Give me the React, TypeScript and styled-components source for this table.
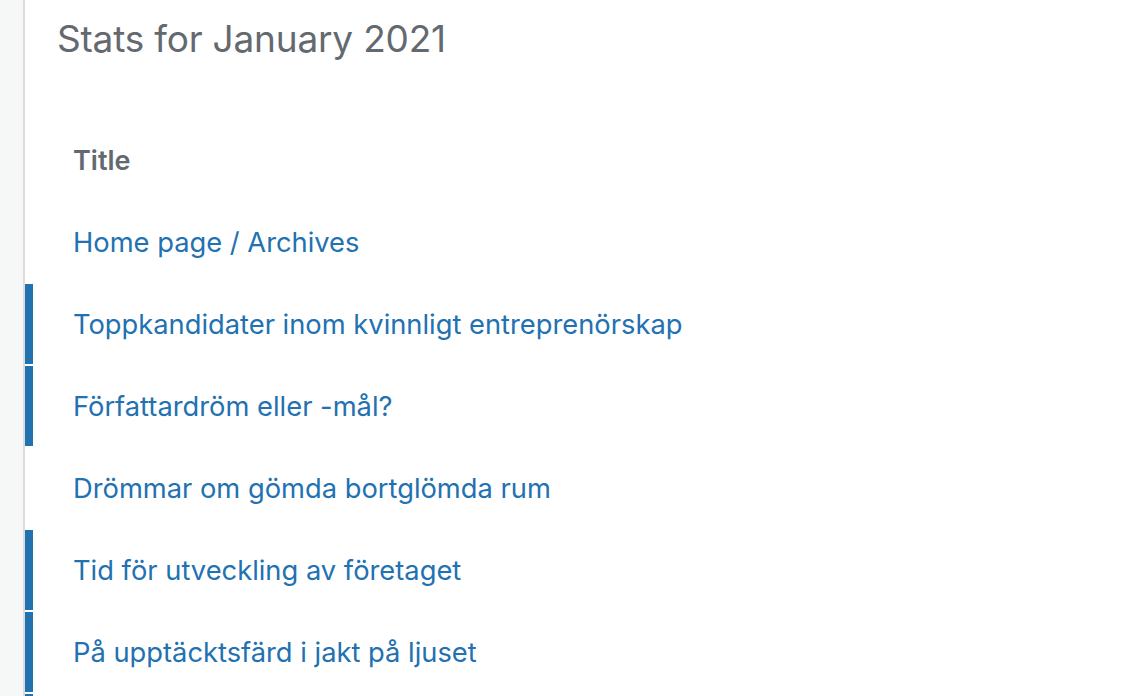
import React from "react";
import styled, { createGlobalStyle } from "styled-components";

const Global = createGlobalStyle`
  html, body { margin: 0; padding: 0; background: #fff; }
  body { font-family: Inter, "Liberation Sans", Arial, sans-serif; overflow: hidden; }
`;

const Shell = styled.div`
  display: flex;
  height: 696px;
  overflow: hidden;
`;

const Sidebar = styled.aside`
  width: 23px;
  flex: none;
  background: #f6f7f7;
  border-right: 2px solid #dcdcde;
`;

const Main = styled.main`
  flex: 1;
  display: flex;
  flex-direction: column;
  overflow: hidden;
`;

const Heading = styled.h1`
  flex: none;
  margin: 0;
  padding: 17px 0 0 32px;
  height: 120px;
  box-sizing: border-box;
  font-weight: 400;
  font-size: 37px;
  line-height: 44px;
  color: #646970;
  letter-spacing: -0.2px;
`;

const Table = styled.div`
  flex: none;
  display: flex;
  flex-direction: column;
  gap: 2px;
`;

const Row = styled.div<{ $active?: boolean }>`
  height: 80px;
  flex: none;
  display: flex;
  align-items: center;
  box-sizing: border-box;
  padding-left: 40px;
  border-left: 8px solid ${(p) => (p.$active ? "#2271b1" : "transparent")};
`;

const HeadCell = styled.span`
  font-size: 27px;
  font-weight: 600;
  color: #646970;
`;

const Link = styled.a`
  font-size: 27.3px;
  color: #2271b1;
  text-decoration: none;
`;

const rows = [
  { title: "Home page / Archives", active: false },
  { title: "Toppkandidater inom kvinnligt entreprenörskap", active: true },
  { title: "Författardröm eller -mål?", active: true },
  { title: "Drömmar om gömda bortglömda rum", active: false },
  { title: "Tid för utveckling av företaget", active: true },
  { title: "På upptäcktsfärd i jakt på ljuset", active: true },
];

export default function App() {
  return (
    <>
      <Global />
      <Shell>
        <Sidebar />
        <Main>
          <Heading>Stats for January 2021</Heading>
          <Table>
            <Row>
              <HeadCell>Title</HeadCell>
            </Row>
            {rows.map((r) => (
              <Row key={r.title} $active={r.active}>
                <Link href="#">{r.title}</Link>
              </Row>
            ))}
            <Row $active aria-hidden="true" />
          </Table>
        </Main>
      </Shell>
    </>
  );
}
